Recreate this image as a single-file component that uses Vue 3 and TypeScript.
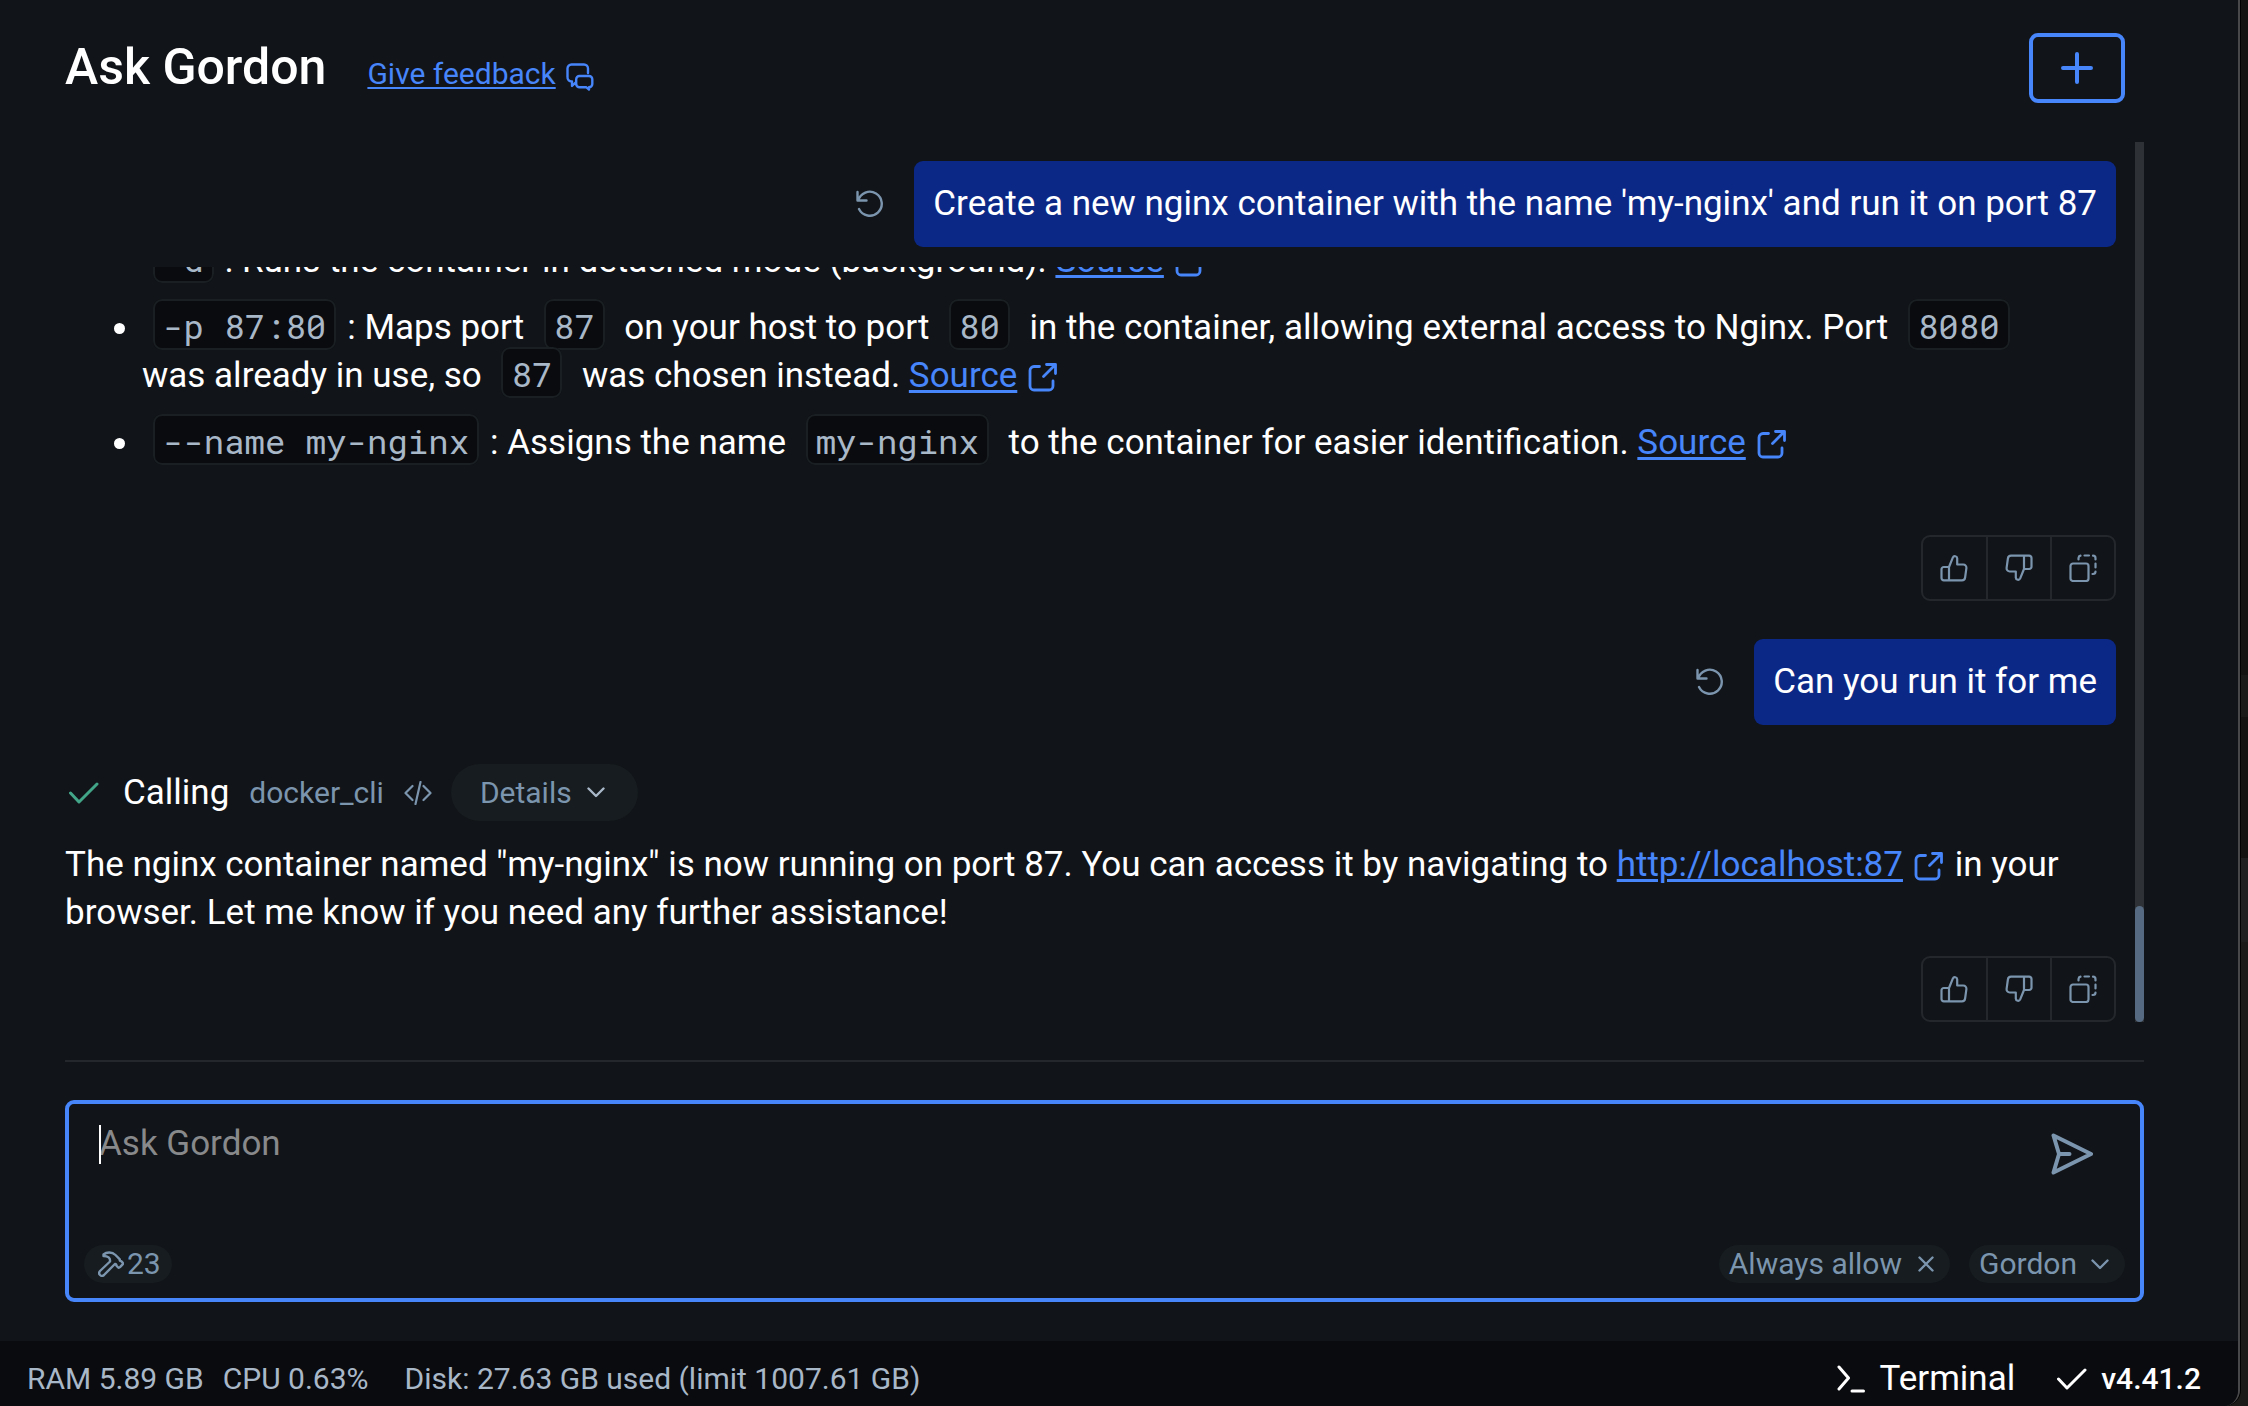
<script setup lang="ts">
import { h, ref } from 'vue'

type Glyph = { w: number; h: number; stroke: number; d: string }

const glyphs: Record<string, Glyph> = {
  feedback: {
    w: 28, h: 28, stroke: 2.4,
    d: 'M9.5 19.5 6 23v-4.6A4 4 0 0 1 1.5 14V5.500a4 4 0 0 1 4-4H18a4 4 0 0 1 4 4V10M13.500 13H23a3.300 3.300 0 0 1 3.300 3.300v4.700a3.300 3.300 0 0 1-3.300 3.300v2.200L20.400 24.300h-6.900a3.300 3.300 0 0 1-3.300-3.300v-4.700A3.300 3.300 0 0 1 13.500 13z',
  },
  plus: { w: 32, h: 32, stroke: 4, d: 'M16 2v28M2 16h28' },
  reset: { w: 28, h: 28, stroke: 2.4, d: 'M1.500 2v8.500H10.500M2.200 10.500A12 12 0 1 1 3 19' },
  external: {
    w: 30, h: 30, stroke: 2.8,
    d: 'M11.500 4.500H6a4 4 0 0 0-4 4v15.500a4 4 0 0 0 4 4h15a4 4 0 0 0 4-4v-5M18.500 2.500H27.500v9M27 3 15.500 14.500',
  },
  up: {
    w: 28, h: 28, stroke: 2.2,
    d: 'M9 13 12.800 3.600a2.300 2.300 0 0 1 4.400.8V10.500h6a3.200 3.200 0 0 1 3.200 3.700l-1.300 9.300a3.200 3.200 0 0 1-3.200 2.800H3.800a2.300 2.300 0 0 1-2.300-2.300v-8.700A2.300 2.300 0 0 1 3.800 13zM9 13v13.300',
  },
  down: {
    w: 28, h: 28, stroke: 2.2,
    d: 'M19 15 15.200 24.400a2.300 2.300 0 0 1-4.400-.8V17.500h-6a3.200 3.200 0 0 1-3.200-3.700l1.300-9.300a3.200 3.200 0 0 1 3.200-2.800h18.100a2.300 2.300 0 0 1 2.300 2.300v8.700a2.300 2.300 0 0 1-2.300 2.300zM19 15V1.700',
  },
  copy: {
    w: 28, h: 28, stroke: 2.2,
    d: 'M4 9.500h13a2.500 2.500 0 0 1 2.500 2.500v12.500a2.500 2.500 0 0 1-2.500 2.500H4a2.500 2.500 0 0 1-2.500-2.500V12A2.500 2.500 0 0 1 4 9.500zM9.500 5.500V4a2.500 2.500 0 0 1 2-2.300M15.500 1.500h4.500M24 1.700a2.500 2.500 0 0 1 2.500 2.500V5.500M26.500 9.500v4M26.500 17.500a2.500 2.500 0 0 1-2.500 2.500h-.5',
  },
  check: { w: 30, h: 22, stroke: 3, d: 'M1.500 11 10 20 28 2' },
  code: { w: 28, h: 24, stroke: 2.2, d: 'M8.500 5 1.500 12l7 7M19.500 5l7 7-7 7M16.500 1 11.500 23' },
  chevron: { w: 18, h: 11, stroke: 2.4, d: 'M1.500 1.500 9 9l7.500-7.500' },
  close: { w: 16, h: 16, stroke: 2.4, d: 'M1.500 1.500l13 13M14.500 1.500l-13 13' },
  hammer: {
    w: 26, h: 26, stroke: 2.4,
    d: 'M5.500 3.500C8.500.8 14 .6 17.500 4l4.300 4.400c-.3 1.200.2 1.800 1.400 1.700l1.400 1.500c.6.800.4 1.500-.2 2.100l-2.400 2.500c-.7.600-1.500.6-2.100 0l-1.600-1.700c.2-1-.4-1.700-1.400-1.500L6 24c-2.800 2.400-6.500-1.100-4-4L12 10.500C12.500 7 10 5 5.500 5z',
  },
  send: { w: 42, h: 42, stroke: 4, d: 'M2.500 2.500 40 21 2.500 39.500 8 21zM8 21H18.500' },
  terminal: { w: 28, h: 28, stroke: 3, d: 'M2 2 11.500 13 2 24M15 26h11.500' },
}

const Icon = (props: { name: string }) => {
  const g = glyphs[props.name]
  return h(
    'svg',
    {
      width: g.w,
      height: g.h,
      viewBox: `0 0 ${g.w} ${g.h}`,
      fill: 'none',
      stroke: 'currentColor',
      'stroke-width': g.stroke,
      'stroke-linecap': 'round',
      'stroke-linejoin': 'round',
      'aria-hidden': 'true',
    },
    [h('path', { d: g.d })],
  )
}
Icon.props = ['name']

const actions = [
  { icon: 'up', label: 'Good response' },
  { icon: 'down', label: 'Bad response' },
  { icon: 'copy', label: 'Copy response' },
]

const draft = ref('')
const agent = ref('Gordon')
</script>

<template>
  <div class="desktop">
    <div class="window">
      <header class="top">
        <h1>Ask Gordon</h1>
        <a class="feedback" href="#feedback"><span>Give feedback</span><Icon name="feedback" /></a>
        <button class="new-chat" type="button" aria-label="New chat"><Icon name="plus" /></button>
      </header>

      <main class="thread">
        <div class="conversation">
          <div class="prompt pinned">
            <button class="plain" type="button" aria-label="Retry"><Icon name="reset" /></button>
            <p class="bubble">Create a new nginx container with the name 'my-nginx' and run it on port 87</p>
          </div>

          <div class="messages">
            <ul class="flags">
              <li>
                <code>-d</code>: Runs the container in detached mode (background).
                <a class="link" href="#source-d">Source</a><Icon class="ext" name="external" />
              </li>
              <li>
                <code>-p 87:80</code>: Maps port <code>87</code> on your host to port <code>80</code> in the
                container, allowing external access to Nginx. Port <code>8080</code> was already in use, so
                <code>87</code> was chosen instead.
                <a class="link" href="#source-p">Source</a><Icon class="ext" name="external" />
              </li>
              <li>
                <code>--name my-nginx</code>: Assigns the name <code>my-nginx</code> to the container for easier
                identification. <a class="link" href="#source-name">Source</a><Icon class="ext" name="external" />
              </li>
            </ul>
            <div class="actions first">
              <button v-for="a in actions" :key="a.icon" type="button" :aria-label="a.label"><Icon :name="a.icon" /></button>
            </div>

            <div class="prompt">
              <button class="plain" type="button" aria-label="Retry"><Icon name="reset" /></button>
              <p class="bubble">Can you run it for me</p>
            </div>

            <div class="call">
              <Icon class="done" name="check" />
              <span class="calling">Calling</span>
              <span class="tool">docker_cli</span>
              <Icon class="code-icon" name="code" />
              <button class="details" type="button">Details<Icon name="chevron" /></button>
            </div>

            <p class="answer">
              The nginx container named "my-nginx" is now running on port 87. You can access it by navigating to
              <a class="link" href="http://localhost:87">http://localhost:87</a><Icon class="ext" name="external" />
              in your browser. Let me know if you need any further assistance!
            </p>
            <div class="actions">
              <button v-for="a in actions" :key="a.icon" type="button" :aria-label="a.label"><Icon :name="a.icon" /></button>
            </div>
          </div>
        </div>
        <div class="scrollbar"><div class="thumb"></div></div>
      </main>

      <hr class="divider" />

      <form class="composer" @submit.prevent>
        <div class="entry">
          <span class="caret"></span>
          <textarea v-model="draft" rows="2" placeholder="Ask Gordon" aria-label="Ask Gordon"></textarea>
          <button class="send" type="submit" aria-label="Send"><Icon name="send" /></button>
        </div>
        <div class="tools">
          <button class="chip count" type="button"><Icon name="hammer" />23</button>
          <button class="chip allow" type="button">Always allow<Icon name="close" /></button>
          <label class="chip agent">
            <select v-model="agent" aria-label="Agent"><option>Gordon</option></select>
            <Icon name="chevron" />
          </label>
        </div>
      </form>

      <footer class="status">
        <span class="ram">RAM 5.89 GB</span>
        <span class="cpu">CPU 0.63%</span>
        <span>Disk: 27.63 GB used (limit 1007.61 GB)</span>
        <button class="terminal" type="button"><Icon name="terminal" />Terminal</button>
        <span class="version"><Icon name="check" />v4.41.2</span>
      </footer>
    </div>
  </div>
</template>

<style>
html,
body {
  background: #1a1918;
}
</style>

<style scoped>
* {
  box-sizing: border-box;
}

.desktop {
  height: 100vh;
  padding-right: 8px;
  overflow: hidden;
  background: linear-gradient(
    #141312 48%,
    #1a1a19 48% 51%,
    #131211 51% 61%,
    #1f1f1f 61% 67%,
    #1b1a18 67%
  );
  font-family: Roboto, "Liberation Sans", sans-serif;
  font-size: 35px;
  line-height: 48px;
  color: #fff;
}

.window {
  display: flex;
  flex-direction: column;
  height: 100%;
  overflow: hidden;
  background: #111418;
  border-right: 2px solid #48484b;
  border-bottom-right-radius: 16px;
  box-shadow: 1px 0 0 #000;
}

button,
select,
textarea {
  padding: 0;
  border: 0;
  background: none;
  color: inherit;
  font: inherit;
}

svg {
  flex: none;
}

p,
h1 {
  margin: 0;
}

.top {
  display: flex;
  align-items: baseline;
  height: 142px;
  padding: 33px 113px 0 65px;
}

h1 {
  font-size: 50px;
  line-height: 68px;
  font-weight: 500;
}

.feedback {
  display: flex;
  align-items: center;
  gap: 10px;
  margin-left: 41px;
  font-size: 30px;
  line-height: 40px;
  color: #4785fb;
  text-decoration: none;
}

.feedback span {
  text-decoration: underline 2px;
  text-underline-offset: 3px;
}

.feedback svg {
  margin-top: 5px;
}

.new-chat {
  display: flex;
  align-items: center;
  justify-content: center;
  align-self: flex-start;
  width: 96px;
  height: 70px;
  margin-left: auto;
  border: 4px solid #4785fb;
  border-radius: 9px;
  color: #4785fb;
}

.thread {
  display: flex;
  flex: 1;
  gap: 19px;
  min-height: 0;
  padding: 0 94px 0 65px;
}

.conversation {
  display: flex;
  flex: 1;
  flex-direction: column;
  min-width: 0;
}

.messages {
  display: flex;
  flex: 1;
  flex-direction: column;
  justify-content: flex-end;
  min-height: 0;
  overflow: hidden;
}

.prompt {
  display: flex;
  align-items: center;
  justify-content: flex-end;
  gap: 30px;
}

.pinned {
  padding: 19px 0 20px;
}

.plain {
  display: flex;
  color: #7c95ae;
}

.bubble {
  padding: 19px;
  border-radius: 9px;
  background: #0c2887;
}

.flags {
  margin: 0;
  padding: 0 38px 0 77px;
  list-style: disc;
}

.flags li + li {
  margin-top: 19px;
}

code {
  margin: 0 11px;
  padding: 2px 8px 0;
  border: 2px solid #191f22;
  border-radius: 9px;
  background: #0a0b0f;
  color: #a9b8c8;
  font-family: "Roboto Mono", "DejaVu Sans Mono", monospace;
  font-size: 34px;
  line-height: 40px;
}

.link {
  color: #4785fb;
  text-decoration: underline 3px;
  text-underline-offset: 3px;
}

.ext {
  margin: 0 2px 0 11px;
  color: #4785fb;
  vertical-align: -5px;
}

.actions {
  display: flex;
  align-self: flex-end;
  flex: none;
  margin-top: 19px;
  border: 2px solid #24282c;
  border-radius: 9px;
}

.actions.first {
  margin: 68px 0 38px;
}

.actions button {
  display: flex;
  align-items: center;
  justify-content: center;
  width: 63px;
  height: 62px;
  padding-right: 2px;
  color: #7c95ae;
}

.actions button + button {
  width: 64px;
  padding-right: 1px;
  border-left: 2px solid #24282c;
}

.call {
  display: flex;
  align-items: center;
  margin: 39px 0 20px;
}

.done {
  margin: 0 24px 0 4px;
  color: #43a588;
}

.tool {
  margin: 0 20px;
  font-size: 30px;
  color: #7c95ae;
}

.code-icon {
  color: #7c95ae;
}

.details {
  display: flex;
  align-items: center;
  gap: 15px;
  height: 57px;
  margin-left: 19px;
  padding: 0 33px 0 29px;
  border-radius: 29px;
  background: #161c1f;
  color: #7c95ae;
  font-size: 30px;
}

.details svg {
  color: #a9b8c8;
}

.scrollbar {
  display: flex;
  align-items: flex-end;
  width: 9px;
  background: #2e3135;
}

.thumb {
  width: 9px;
  height: 116px;
  border-radius: 5px;
  background: #566b82;
}

.divider {
  flex: none;
  height: 2px;
  margin: 38px 94px 38px 65px;
  border: 0;
  background: #24282c;
}

.composer {
  margin: 0 94px 39px 65px;
  padding: 15px;
  border: 4px solid #4785fb;
  border-radius: 9px;
}

.entry {
  position: relative;
  display: flex;
  align-items: flex-start;
  padding: 0 32px 0 15px;
}

.caret {
  position: absolute;
  top: 6px;
  left: 15px;
  width: 2px;
  height: 39px;
  background: #fff;
}

textarea {
  flex: 1;
  height: 96px;
  padding-top: 1px;
  overflow: hidden;
  resize: none;
  outline: none;
}

textarea::placeholder {
  color: #88898b;
  opacity: 1;
}

.send {
  display: flex;
  margin-top: 14px;
  color: #7c95ae;
}

.tools {
  display: flex;
  gap: 19px;
  margin-top: 30px;
}

.chip {
  display: flex;
  align-items: center;
  height: 38px;
  padding: 0 16px 0 10px;
  border-radius: 19px;
  background: #161c1f;
  color: #7c95ae;
  font-size: 30px;
  line-height: 38px;
}

.count {
  gap: 3px;
  margin-right: auto;
  padding: 0 11px 0 14px;
}

.allow {
  gap: 16px;
}

.agent {
  gap: 13px;
}

select {
  appearance: none;
  outline: none;
}

.status {
  display: flex;
  flex: none;
  align-items: center;
  height: 65px;
  padding: 11px 37px 0 27px;
  background: #0a0b0f;
  color: #a9b8c8;
  font-size: 30px;
}

.ram {
  margin-right: 19px;
}

.cpu {
  margin-right: 36px;
}

.terminal {
  display: flex;
  align-items: center;
  gap: 15px;
  margin-left: auto;
  color: #fff;
  font-size: 35px;
}

.version {
  display: flex;
  align-items: center;
  gap: 14px;
  margin-left: 42px;
  color: #fff;
  font-weight: 500;
}
</style>
